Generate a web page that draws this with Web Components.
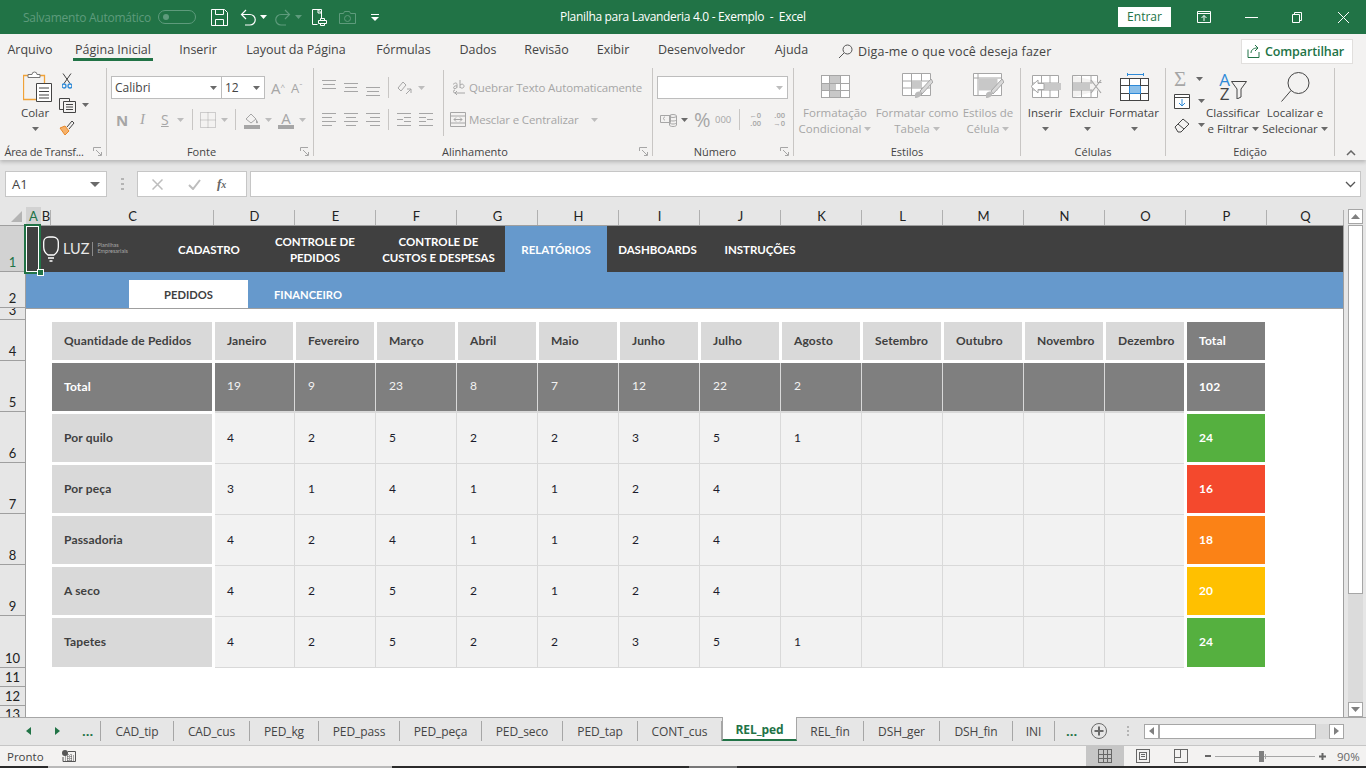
<!DOCTYPE html>
<html lang="pt-BR">
<head>
<meta charset="utf-8">
<title>Planilha para Lavanderia</title>
<style>
  html, body { margin: 0; height: 100%; overflow: hidden; background: #e6e6e6; }
  body { display: flex; flex-direction: column; width: 1366px; height: 768px; font-family: "Open Sans", "Noto Sans", sans-serif; }
  .strip { height: 2px; flex: none; background: linear-gradient(90deg, #2b2b2b 0 48px, #b9b9b9 48px 392px, #2b2b2b 392px 689px, #777 689px 737px, #2b2b2b 737px); }
</style>
</head>
<body>
<title-bar></title-bar>
<menu-tabs></menu-tabs>
<excel-ribbon></excel-ribbon>
<formula-bar></formula-bar>
<excel-sheet>
  <nav-bar></nav-bar>
  <sub-nav></sub-nav>
  <report-table></report-table>
</excel-sheet>
<sheet-tabs>
  <sheet-tab style="width:73px">CAD_tip</sheet-tab>
  <sheet-tab style="width:76px">CAD_cus</sheet-tab>
  <sheet-tab style="width:69px">PED_kg</sheet-tab>
  <sheet-tab style="width:81px">PED_pass</sheet-tab>
  <sheet-tab style="width:82px">PED_peça</sheet-tab>
  <sheet-tab style="width:81px">PED_seco</sheet-tab>
  <sheet-tab style="width:75px">PED_tap</sheet-tab>
  <sheet-tab style="width:84px">CONT_cus</sheet-tab>
  <sheet-tab style="width:75px" active>REL_ped</sheet-tab>
  <sheet-tab style="width:67px">REL_fin</sheet-tab>
  <sheet-tab style="width:76px">DSH_ger</sheet-tab>
  <sheet-tab style="width:73px">DSH_fin</sheet-tab>
  <sheet-tab style="width:42px">INI</sheet-tab>
</sheet-tabs>
<status-bar></status-bar>
<div class="strip"></div>

<script>
const GREY = '#a6a6a6';
const caret = (c = '#6a6a6a') => `<svg width="7" height="4" viewBox="0 0 7 4" style="flex:none"><path d="M0 0h7L3.5 4z" fill="${c}"/></svg>`;
const lines = (rows, c = GREY) => `<svg width="14" height="20" viewBox="0 0 14 20" style="flex:none" shape-rendering="crispEdges">${rows.map(r => `<rect x="${r[0]}" y="${r[1]}" width="${r[2]}" height="1" fill="${c}"/>`).join('')}</svg>`;

class TitleBar extends HTMLElement {
  constructor() {
    super();
    this.attachShadow({ mode: 'open' });
    this.shadowRoot.innerHTML = `
      <style>
        :host { display: flex; flex: none; height: 34px; background: #217346; color: #fff; align-items: center; font-size: 12px; position: relative; }
        .dim { color: #5e9b7c; margin-left: 23px; width: 135px; white-space: nowrap; letter-spacing: -.25px; }
        svg { display: block; flex: none; }
        .title { position: absolute; left: 560px; top: 8px; white-space: nowrap; letter-spacing: -.32px; }
        .qat { display: flex; align-items: center; }
        .enter { width: 53px; height: 20px; background: #fff; color: #217346; margin-left: auto; line-height: 20px; text-align: center; }
        .win { display: flex; align-items: center; }
      </style>
      <div class="dim">Salvamento Automático</div>
      <div class="qat">
        <svg width="38" height="14" viewBox="0 0 38 14" fill="none" stroke="#5e9b7c"><rect x=".5" y=".5" width="37" height="13" rx="6.5"/><circle cx="8" cy="7" r="3" fill="#5e9b7c" stroke="none"/></svg>
        <svg style="margin-left:15px" width="17" height="17" viewBox="0 0 17 17" fill="none" stroke="#fff"><path d="M.5.5h13l3 3v13H.5z"/><path d="M4.5.5v5h8v-5M4.5 16.5v-6h8v6"/></svg>
        <svg style="margin-left:12px" width="16" height="17" viewBox="0 0 16 17" fill="none" stroke="#fff" stroke-width="1.2"><path d="M6 1L1.500 5.500 6 10M1.500 5.500H10a4.700 4.700 0 0 1 0 10.500H5"/></svg>
        <span style="margin-left:4px;display:flex">${caret('#fff')}</span>
        <svg style="margin-left:8px" width="16" height="17" viewBox="0 0 16 17" fill="none" stroke="#5e9b7c" stroke-width="1.2"><path d="M10 1l4.500 4.500L10 10M14.500 5.500H6a4.700 4.700 0 0 0 0 10.500h5"/></svg>
        <span style="margin-left:4px;display:flex">${caret('#5e9b7c')}</span>
        <svg style="margin-left:10px" width="15" height="17" viewBox="0 0 15 17" fill="none" stroke="#fff"><path d="M9.500 9.500V.5H.5v15h5M6 .5l3.500 3.500H6z"/><path d="M6.500 11.500h8v3h-8zM8.500 11.500v-2h4v2M8.500 14.500v2h4v-2" fill="#217346"/></svg>
        <svg style="margin-left:12px" width="17" height="13" viewBox="0 0 17 13" fill="none" stroke="#5e9b7c"><path d="M.5 2.500h4l1-2h5l1 2h5v10H.5z"/><circle cx="8.500" cy="7.500" r="3"/></svg>
        <svg style="margin-left:15px" width="8" height="7" viewBox="0 0 8 7" fill="#fff"><rect width="8" height="1"/><path d="M0 3h8L4 7z"/></svg>
      </div>
      <div class="title">Planilha para Lavanderia 4.0 - Exemplo&nbsp; -&nbsp; Excel</div>
      <div class="enter">Entrar</div>
      <div class="win">
        <svg style="margin-left:26px" width="14" height="12" viewBox="0 0 14 12" fill="none" stroke="#fff"><path d="M.5.500h13v11H.5zM.5 2.500h13M7 10V4.500M4.500 7L7 4.500 9.500 7"/></svg>
        <svg style="margin-left:34px" width="13" height="1" viewBox="0 0 13 1"><rect width="13" height="1" fill="#fff"/></svg>
        <svg style="margin-left:34px" width="10" height="11" viewBox="0 0 10 11" fill="none" stroke="#fff"><path d="M.5 2.500h7v8h-7zM2.500 2.500v-2h7v8h-2"/></svg>
        <svg style="margin-left:36px;margin-right:17px" width="11" height="11" viewBox="0 0 11 11" fill="none" stroke="#fff"><path d="M0 0l11 11M11 0L0 11"/></svg>
      </div>`;
  }
}
customElements.define('title-bar', TitleBar);

class MenuTabs extends HTMLElement {
  constructor() {
    super();
    this.attachShadow({ mode: 'open' });
    const tabs = [['Inserir', 90], ['Layout da Página', 106], ['Fórmulas', 109], ['Dados', 40], ['Revisão', 97], ['Exibir', 36], ['Desenvolvedor', 141], ['Ajuda', 39]];
    this.shadowRoot.innerHTML = `
      <style>
        :host { display: flex; flex: none; height: 34px; background: #f3f2f1; color: #444; font-size: 12.5px; align-items: center; position: relative; z-index: 2; }
        .tab { text-align: center; white-space: nowrap; flex: none; height: 34px; line-height: 32px; box-sizing: border-box; display: flex; justify-content: center; }
        .tab.on { border-bottom: 3px solid #217346; height: 27px; width: 80px; margin-left: 13px; align-self: flex-start; }
        .search { display: flex; align-items: center; gap: 5px; margin-left: 27px; white-space: nowrap; letter-spacing: .17px; }
        .share { margin-left: auto; margin-right: 13px; width: 112px; height: 25px; background: #fff; border: 1px solid #e1dfdd; box-sizing: border-box; color: #217346; font-weight: 600; display: flex; align-items: center; justify-content: center; gap: 4px; font-size: 12.5px; letter-spacing: -.1px; padding-right: 3px; }
        svg { display: block; flex: none; }
      </style>
      <div class="tab" style="width:60px">Arquivo</div>
      <div class="tab on">Página Inicial</div>
      ${tabs.map(t => `<div class="tab" style="width:${t[1]}px">${t[0]}</div>`).join('')}
      <div class="search">
        <svg width="15" height="15" viewBox="0 0 15 15" fill="none" stroke="#555"><circle cx="9.500" cy="5.500" r="4.500"/><path d="M6 9l-5 5"/></svg>
        Diga-me o que você deseja fazer
      </div>
      <div class="share">
        <svg width="14" height="14" viewBox="0 0 14 14" fill="none" stroke="#217346"><path d="M1 5.500v8h11V8M4 9c0-3 2.500-5 6-5M8 1l3 3-3 3"/></svg>
        Compartilhar
      </div>`;
  }
}
customElements.define('menu-tabs', MenuTabs);

class RibbonGroup extends HTMLElement {
  constructor() {
    super();
    this.attachShadow({ mode: 'open' });
    const launcher = this.hasAttribute('launcher');
    this.shadowRoot.innerHTML = `
      <style>
        :host { display: flex; flex-direction: column; flex: none; box-sizing: border-box; height: 88px; border-right: 1px solid #c8c6c4; position: relative; }
        .body { display: flex; height: 77px; flex: none; }
        .label { font-size: 11px; line-height: 14px; color: #444; text-align: center; white-space: nowrap; padding-right: var(--label-shift, 0); letter-spacing: var(--label-ls, 0); }
        svg { position: absolute; right: 4px; bottom: 0; }
      </style>
      <div class="body"><slot></slot></div>
      <div class="label">${this.getAttribute('label')}</div>
      ${launcher ? `<svg width="9" height="9" viewBox="0 0 9 9" fill="none" stroke="${GREY}"><path d="M.5 4V.5H8M8.500 8.500H5M3 3l5 5M8.500 5v3.500"/></svg>` : ''}`;
  }
}
customElements.define('ribbon-group', RibbonGroup);

class ExcelRibbon extends HTMLElement {
  constructor() {
    super();
    this.attachShadow({ mode: 'open' });
    this.shadowRoot.innerHTML = `
      <style>
        :host { display: flex; flex: none; height: 92px; background: #f3f2f1; box-shadow: 0 2px 4px rgba(0,0,0,.22); position: relative; z-index: 1; font-size: 11.5px; color: #444; }
        svg { display: block; flex: none; }
        .big { display: flex; flex-direction: column; align-items: center; flex: none; line-height: 16px; white-space: nowrap; }
        .big .ico { height: 37px; display: flex; align-items: center; justify-content: center; }
        .big .l { height: 16px; display: flex; align-items: center; gap: 3px; }
        .off { color: ${GREY}; }
        .col { display: flex; flex-direction: column; flex: none; }
        .sm { height: 22px; display: flex; align-items: center; gap: 6px; flex: none; }
        .rows { display: flex; flex-direction: column; gap: 9px; padding-top: 8px; flex: none; }
        .row { display: flex; align-items: center; height: 23px; flex: none; }
        .txt { font-size: 11.5px; white-space: nowrap; letter-spacing: -.14px; }
        .sel { box-sizing: border-box; height: 23px; background: #fff; border: 1px solid #bdbdbd; display: flex; align-items: center; justify-content: space-between; padding: 0 4px 0 3px; font-size: 12px; color: #444; flex: none; }
        .g { color: ${GREY}; }
        .sep { width: 1px; height: 21px; background: #c8c6c4; flex: none; }
        .bold { font-weight: 700; font-size: 15px; }
        .fontA { font-size: 15px; color: ${GREY}; line-height: 16px; position: relative; }
        .chev { position: absolute; left: 1346px; top: 82px; }
        .sortA { color: #2e8ad8; font-size: 17px; line-height: 14px; }
        .sortZ { color: #444; font-size: 17px; line-height: 14px; }
      </style>

      <ribbon-group label="Área de Transf..." launcher style="width:107px;--label-shift:18px;--label-ls:-.25px">
        <div class="big" style="width:30px;margin-left:20px">
          <div class="ico" style="margin-left:5px">
            <svg width="29" height="31" viewBox="0 0 29 31" fill="none"><path d="M6 4.500H.5v24h14" stroke="#f0a238" stroke-width="1.300"/><path d="M16 4.500h5.500V12" stroke="#f0a238" stroke-width="1.300"/><path d="M5 6.500v-3h4a2.500 2.500 0 0 1 5 0h3v3z" fill="#fff" stroke="#777"/><path d="M13.500 12.500h15v18h-15z" fill="#fff" stroke="#444"/><path d="M16 17h10M16 20.500h10M16 24h10M16 27h10" stroke="#444"/></svg>
          </div>
          <div class="l">Colar</div>
          <div class="l">${caret()}</div>
        </div>
        <div class="col" style="margin-left:9px;padding-top:2px">
          <div class="sm" style="padding-left:3px"><svg width="10" height="16" viewBox="0 0 10 16" fill="none"><path d="M1 .5l7 10M9 .5l-7 10" stroke="#444"/><circle cx="2" cy="13" r="2" stroke="#2e8ad8" stroke-width="1.300"/><circle cx="8" cy="13" r="2" stroke="#2e8ad8" stroke-width="1.300"/></svg></div>
          <div class="sm" style="margin-top:2px"><svg width="17" height="15" viewBox="0 0 17 15" fill="none" stroke="#444"><path d="M.5.500h10v3M.5.500v11h4"/><path d="M4.500 3.500h12v11h-12zM7 6.500h7M7 9h7M7 11.500h7"/></svg>${caret()}</div>
          <div class="sm" style="margin-top:1px"><svg width="16" height="16" viewBox="0 0 16 16"><path d="M1 8l5 7 4-4-4-5z" fill="#f6b26b" stroke="#e8892a"/><path d="M8 7l5-6 2 2-5 6" fill="none" stroke="#444"/></svg></div>
        </div>
      </ribbon-group>

      <ribbon-group label="Fonte" launcher style="width:207px;--label-shift:17px">
        <div class="rows" style="margin-left:4px">
          <div class="row">
            <div class="sel" style="width:111px">Calibri ${caret()}</div>
            <div class="sel" style="width:44px;margin-left:-1px">12 ${caret()}</div>
            <span class="fontA" style="margin-left:6px">A<sup style="font-size:8px;vertical-align:4px;line-height:0">^</sup></span>
            <span class="fontA" style="margin-left:6px;font-size:13px">A<sup style="font-size:8px;vertical-align:4px;line-height:0">ˇ</sup></span>
          </div>
          <div class="row">
            <span class="g bold" style="margin-left:5px;width:12px">N</span>
            <span class="g" style="margin-left:12px;width:9px;font-style:italic;font-size:15px;font-family:'Liberation Serif',serif">I</span>
            <span class="g" style="margin-left:12px;width:13px;font-size:14px;text-decoration:underline">S</span>
            <span style="margin-left:3px">${caret('#bdbdbd')}</span>
            <span class="sep" style="margin-left:8px"></span>
            <svg style="margin-left:7px" width="16" height="16" viewBox="0 0 16 16" fill="none" stroke="${GREY}" stroke-dasharray="1 1"><path d="M.5.500h15v15H.5zM8 .500v15M.5 8h15"/></svg>
            <span style="margin-left:5px">${caret('#bdbdbd')}</span>
            <span class="sep" style="margin-left:7px"></span>
            <svg style="margin-left:8px" width="16" height="18" viewBox="0 0 16 18"><path d="M2 8l5-5 5 5-5 4z" fill="none" stroke="${GREY}"/><path d="M12 8c1 1.500 2 2.500 2 3.500s-2 1-2 0z" fill="${GREY}"/><rect y="14" width="16" height="4" fill="${GREY}"/></svg>
            <span style="margin-left:5px">${caret('#bdbdbd')}</span>
            <div style="margin-left:6px;width:16px;display:flex;flex-direction:column;align-items:center;flex:none"><span class="fontA" style="line-height:14px">A</span><span style="width:16px;height:4px;background:${GREY}"></span></div>
            <span style="margin-left:5px">${caret('#bdbdbd')}</span>
          </div>
        </div>
      </ribbon-group>

      <ribbon-group label="Alinhamento" launcher style="width:339px;--label-shift:16px">
        <div class="rows" style="margin-left:8px;width:121px">
          <div class="row">
            <svg width="14" height="20" viewBox="0 0 14 20" shape-rendering="crispEdges" fill="${GREY}"><rect y="2" width="14" height="1"/><rect x="1" y="6" width="12" height="1"/><rect y="10" width="14" height="1"/></svg>
            <svg style="margin-left:8px" width="14" height="20" viewBox="0 0 14 20" shape-rendering="crispEdges" fill="${GREY}"><rect y="5" width="14" height="1"/><rect x="1" y="9" width="12" height="1"/><rect y="13" width="14" height="1"/></svg>
            <svg style="margin-left:8px" width="14" height="20" viewBox="0 0 14 20" shape-rendering="crispEdges" fill="${GREY}"><rect y="9" width="14" height="1"/><rect x="1" y="13" width="12" height="1"/><rect y="17" width="14" height="1"/></svg>
            <span class="sep" style="margin-left:8px"></span>
            <svg style="margin-left:7px" width="16" height="16" viewBox="0 0 16 16" fill="none" stroke="${GREY}"><path d="M2 8l5-6 3 3-5 6zM10 14l5-5M11 9h4v4"/></svg>
            <span style="margin-left:6px">${caret('#bdbdbd')}</span>
          </div>
          <div class="row">
            ${lines([[0, 3, 14], [0, 7, 10], [0, 11, 14], [0, 15, 10]])}
            <span style="margin-left:8px;display:flex">${lines([[0, 3, 14], [2, 7, 10], [0, 11, 14], [2, 15, 10]])}</span>
            <span style="margin-left:8px;display:flex">${lines([[0, 3, 14], [4, 7, 10], [0, 11, 14], [4, 15, 10]])}</span>
            <span class="sep" style="margin-left:8px"></span>
            <span style="margin-left:8px;display:flex">${lines([[0, 3, 14], [7, 7, 7], [0, 9, 6], [7, 11, 7], [0, 15, 14]])}</span>
            <span style="margin-left:8px;display:flex">${lines([[0, 3, 14], [0, 7, 7], [8, 9, 6], [0, 11, 7], [0, 15, 14]])}</span>
          </div>
        </div>
        <div style="width:1px;height:66px;background:#c8c6c4;flex:none;margin-top:2px"></div>
        <div class="rows" style="margin-left:6px">
          <div class="row off txt" style="gap:2px">
            <svg style="margin-left:2px" width="15" height="17" viewBox="0 0 15 17" fill="none" stroke="${GREY}"><path d="M1 5.500c2-2 4-2 4 0v3M5 7c-3-1-4 2-3 2.500s3-.5 3-1.500M8 1v8M8 6c3-2 4 0 4 1.500S9 10 8 8M13 14H3a1.500 1.500 0 0 1 0-3M5 16l-2-2 2-2"/></svg>
            Quebrar Texto Automaticamente
          </div>
          <div class="row off txt" style="gap:3px">
            <svg width="16" height="15" viewBox="0 0 16 15" fill="none" stroke="${GREY}"><path d="M.5.500h15v14H.5zM.5 4h15M.5 11h15M4 7.500h8M6 5.500l-2 2 2 2M10 5.500l2 2-2 2"/></svg>
            Mesclar e Centralizar
            <span style="margin-left:9px">${caret('#bdbdbd')}</span>
          </div>
        </div>
      </ribbon-group>

      <ribbon-group label="Número" launcher style="width:141px;--label-shift:16px">
        <div class="rows" style="margin-left:4px">
          <div class="row"><div class="sel" style="width:131px;justify-content:flex-end">${caret('#bdbdbd')}</div></div>
          <div class="row">
            <svg style="margin-left:3px" width="17" height="14" viewBox="0 0 17 14" fill="none" stroke="${GREY}"><path d="M.5 2.500h10v7H.5zM5 4c-2 0-2 3 0 3"/><ellipse cx="13" cy="3" rx="3.500" ry="1.500"/><path d="M9.500 3v9c0 2 7 2 7 0V3M9.500 6.500c0 2 7 2 7 0M9.500 9.500c0 2 7 2 7 0"/></svg>
            <span style="margin-left:4px">${caret()}</span>
            <span style="margin-left:6px;font-size:20px;color:${GREY};line-height:20px;width:21px">%</span>
            <span style="font-size:9.500px;color:${GREY};width:20px">000</span>
            <span class="sep" style="margin-left:4px"></span>
            <div style="margin-left:6px;width:15px;height:18px;font-size:7.500px;line-height:8px;color:${GREY};text-align:right;font-weight:600;flex:none">←0<br>.00</div>
            <div style="margin-left:8px;width:16px;height:18px;font-size:7.500px;line-height:8px;color:${GREY};text-align:right;font-weight:600;flex:none">.00<br>→0</div>
          </div>
        </div>
      </ribbon-group>

      <ribbon-group label="Estilos" style="width:227px">
        <div class="big off" style="width:82px">
          <div class="ico"><svg width="29" height="23" viewBox="0 0 29 23" shape-rendering="crispEdges"><path d="M.5.500h28v22H.5z" fill="#fff" stroke="${GREY}"/><path d="M8 1h11v7H8zM1 8h14v7H1zM8 15h12v7H8z" fill="#c8c8c8"/><path d="M.5 8h28M.5 15h28M8 .500v22M19.500 .500v22" fill="none" stroke="${GREY}"/></svg></div>
          <div class="l">Formatação</div>
          <div class="l">Condicional ${caret('#bdbdbd')}</div>
        </div>
        <div class="big off" style="width:82px">
          <div class="ico"><svg width="31" height="28" viewBox="0 0 31 28"><path d="M.5.500h28v22H.5zM.5 8h28M.5 15h28M9.500 .500v22M19.500 .500v22" fill="#fff" stroke="${GREY}"/><path d="M10 8h10v7H10z" fill="#c8c8c8"/><path d="M29 6L18 18l2 3L31 9z" fill="#d8d8d8" stroke="${GREY}"/><path d="M13 21c2-3 5-3 6-1 1 3-3 5-6 5z" fill="#bbb"/></svg></div>
          <div class="l">Formatar como</div>
          <div class="l">Tabela ${caret('#bdbdbd')}</div>
        </div>
        <div class="big off" style="width:60px">
          <div class="ico"><svg width="31" height="28" viewBox="0 0 31 28"><path d="M.5.500h28v22H.5z" fill="#fff" stroke="${GREY}"/><path d="M.5 5h28M5 .500v22" fill="none" stroke="${GREY}"/><path d="M5.500 5.500h19v12h-19z" fill="#c8c8c8"/><path d="M29 6L18 18l2 3L31 9z" fill="#d8d8d8" stroke="${GREY}"/><path d="M13 21c2-3 5-3 6-1 1 3-3 5-6 5z" fill="#bbb"/></svg></div>
          <div class="l">Estilos de</div>
          <div class="l">Célula ${caret('#bdbdbd')}</div>
        </div>
      </ribbon-group>

      <ribbon-group label="Células" style="width:145px">
        <div class="big" style="width:48px">
          <div class="ico"><svg width="31" height="23" viewBox="0 0 31 23"><path d="M2.500.500h26v22h-26zM2.500 8h26M2.500 15h26M11.500 .500v22M20 .500v22" fill="#fff" stroke="${GREY}"/><path d="M12 8h19v7H12z" fill="#c8c8c8"/><path d="M8 5l-7 6.500L8 18v-3.500h6v-6H8z" fill="#fff" stroke="${GREY}"/></svg></div>
          <div class="l">Inserir</div>
          <div class="l">${caret()}</div>
        </div>
        <div class="big" style="width:36px">
          <div class="ico"><svg width="30" height="23" viewBox="0 0 30 23"><path d="M.5.500h25v7h4M.5 8h20M.5 15h20M.5 22.500h25v-7M.5.500v22M9.500 .500v22M19 .500v7M19 15v7.500" fill="#fff" stroke="${GREY}"/><path d="M1 8h17v7H1z" fill="#c8c8c8"/><path d="M19 5l10 13M29 5L19 18" fill="none" stroke="${GREY}" stroke-width="1.200"/></svg></div>
          <div class="l">Excluir</div>
          <div class="l">${caret()}</div>
        </div>
        <div class="big" style="width:58px">
          <div class="ico"><svg width="29" height="28" viewBox="0 0 29 28" shape-rendering="crispEdges"><path d="M7 1.500h16M7 0v3M23 0v3" fill="none" stroke="#2e8ad8"/><path d="M.5 5.500h28v22H.5z" fill="#fff" stroke="#444"/><path d="M9 12.500h11v8H9z" fill="#8cc0ea" stroke="#2e8ad8"/><path d="M.5 12.500h8M20.500 12.500h8M.5 20.500h8M20.500 20.500h8M9 5.500v7M20 5.500v7M9 20.500v7M20 20.500v7" fill="none" stroke="#444"/></svg></div>
          <div class="l">Formatar</div>
          <div class="l">${caret()}</div>
        </div>
      </ribbon-group>

      <ribbon-group label="Edição" style="width:169px">
        <div class="col" style="width:41px;padding-left:8px;box-sizing:border-box">
          <div class="sm"><span style="font-size:21px;color:${GREY};line-height:18px;width:15px;font-family:'Liberation Serif',serif">Σ</span><span style="margin-left:1px">${caret()}</span></div>
          <div class="sm"><svg width="16" height="15" viewBox="0 0 16 15" fill="none"><path d="M.5.500h15v14H.5z" fill="#fff" stroke="#444"/><path d="M.5 3.500h15" stroke="#444"/><path d="M8 5v7M5 9l3 3 3-3" stroke="#2e8ad8"/></svg><span style="margin-left:2px">${caret()}</span></div>
          <div class="sm" style="margin-top:2px"><svg width="16" height="15" viewBox="0 0 16 15" fill="none" stroke="#444"><path d="M1 9l8-8 6 5-8 8H4z"/><path d="M4 6l6 5"/></svg><span style="margin-left:2px">${caret()}</span></div>
        </div>
        <div class="big" style="width:52px">
          <div class="ico" style="gap:0;align-items:flex-start;padding-top:5px;box-sizing:border-box">
            <div style="display:flex;flex-direction:column;width:14px;align-items:center;margin-left:-2px"><span class="sortA">A</span><span class="sortZ">Z</span></div>
            <svg style="margin-top:8px;margin-left:-1px" width="16" height="18" viewBox="0 0 16 18" fill="none" stroke="#444"><path d="M.5.500h15L10 8v8l-4 2V8z"/></svg>
          </div>
          <div class="l">Classificar</div>
          <div class="l">e Filtrar ${caret()}</div>
        </div>
        <div class="big" style="width:72px">
          <div class="ico"><svg width="29" height="30" viewBox="0 0 29 30" fill="none" stroke="#444"><circle cx="17.500" cy="11" r="10.500"/><path d="M10 18.500L.5 29.500"/></svg></div>
          <div class="l">Localizar e</div>
          <div class="l">Selecionar ${caret()}</div>
        </div>
      </ribbon-group>

      <svg class="chev" width="10" height="6" viewBox="0 0 10 6" fill="none" stroke="#666" stroke-width="1.500"><path d="M1 5l4-4 4 4"/></svg>`;
  }
}
customElements.define('excel-ribbon', ExcelRibbon);

class FormulaBar extends HTMLElement {
  constructor() {
    super();
    this.attachShadow({ mode: 'open' });
    this.shadowRoot.innerHTML = `
      <style>
        :host { display: flex; flex: none; height: 47px; background: #e6e6e6; padding: 11px 5px 10px; box-sizing: border-box; font-size: 12.5px; color: #444; }
        .box { background: #fff; border: 1px solid #c6c6c6; box-sizing: border-box; display: flex; align-items: center; height: 26px; flex: none; }
        .name { width: 102px; justify-content: space-between; padding: 0 6px 0 6px; font-size: 13px; }
        .name i { width: 0; height: 0; border: 4px solid transparent; border-top: 5px solid #6a6a6a; border-bottom: 0; border-left-width: 5px; border-right-width: 5px; }
        .dots { width: 30px; display: flex; align-items: center; justify-content: center; flex: none; }
        .btns { width: 110px; }
        .input { flex: 1; margin-left: 3px; justify-content: flex-end; padding-right: 4px; }
        .fx { font-family: "Liberation Serif", serif; font-style: italic; font-weight: 700; font-size: 13px; color: #666; margin-left: 16px; }
        svg { display: block; flex: none; }
      </style>
      <div class="box name">A1 <i></i></div>
      <div class="dots"><svg width="3" height="12" viewBox="0 0 3 12" fill="#b4b4b4"><rect width="3" height="2"/><rect y="5" width="3" height="2"/><rect y="10" width="3" height="2"/></svg></div>
      <div class="box btns">
        <svg style="margin-left:14px" width="11" height="11" viewBox="0 0 11 11" fill="none" stroke="#bdbdbd" stroke-width="1.500"><path d="M.5.500l10 10M10.500 .500l-10 10"/></svg>
        <svg style="margin-left:25px" width="13" height="11" viewBox="0 0 13 11" fill="none" stroke="#bdbdbd" stroke-width="2"><path d="M1 6l4 4 7-9"/></svg>
        <span class="fx">f<span style="font-size:10px">x</span></span>
      </div>
      <div class="box input"><svg width="11" height="7" viewBox="0 0 11 7" fill="none" stroke="#555" stroke-width="1.300"><path d="M1 1l4.500 4.500L10 1"/></svg></div>`;
  }
}
customElements.define('formula-bar', FormulaBar);

class ExcelSheet extends HTMLElement {
  constructor() {
    super();
    this.attachShadow({ mode: 'open' });
    const cols = [['A', 15], ['B', 10], ['C', 163]];
    'DEFGHIJKLMNOP'.split('').forEach(c => cols.push([c, 81]));
    cols.push(['Q', 77]);
    const rows = [[1, 46], [2, 36], [3, 12], [4, 41], [5, 51], [6, 51], [7, 51], [8, 51], [9, 51], [10, 52], [11, 19], [12, 19], [13, 11]];
    this.shadowRoot.innerHTML = `
      <style>
        :host { display: grid; grid-template-columns: 26px 1fr 22px; grid-template-rows: 19px 1fr; height: 510px; flex: none; background: #e6e6e6; font-family: Lato, Carlito, sans-serif; position: relative; }
        .corner { position: relative; border-bottom: 1px solid #9f9f9f; }
        .corner i { position: absolute; right: 4px; bottom: 3px; width: 0; height: 0; border-left: 11px solid transparent; border-bottom: 11px solid #b4b4b4; }
        .cols { display: flex; border-bottom: 1px solid #9f9f9f; overflow: hidden; }
        .ch { flex: none; box-sizing: border-box; text-align: center; font-size: 13px; line-height: 19px; color: #222; position: relative; }
        .ch::after { content: ""; position: absolute; right: 0; top: 3px; bottom: 0; width: 1px; background: #b0b0b0; }
        .ch.on { background: #d2d2d2; color: #217346; }
        .ch.on::after { display: none; }
        .rows { display: flex; flex-direction: column; border-right: 1px solid #9f9f9f; overflow: hidden; }
        .rh { flex: none; box-sizing: border-box; border-bottom: 1px solid #9f9f9f; display: flex; align-items: flex-end; justify-content: center; font-size: 13px; line-height: 17px; color: #222; overflow: hidden; }
        .rh.on { background: #d2d2d2; color: #217346; }
        .rh.cut { align-items: flex-start; border-bottom: 0; }
        .canvas { background: #fff; border-right: 1px solid #9f9f9f; overflow: hidden; display: flex; flex-direction: column; }
        .cursor { position: absolute; left: 24px; top: 17px; width: 17px; height: 50px; border: 2px solid #217346; box-shadow: inset 0 0 0 1px #fff; box-sizing: border-box; }
        .handle { position: absolute; left: 37px; top: 62px; width: 5px; height: 5px; background: #217346; border: 1px solid #fff; box-sizing: content-box; }
        .vs { display: flex; flex-direction: column; align-items: center; background: #e6e6e6; }
        .vs .track { width: 15px; flex: 1; background: #dbdbdb; display: flex; flex-direction: column; }
        .btn { width: 15px; height: 15px; box-sizing: border-box; background: #fff; border: 1px solid #a6a6a6; display: flex; align-items: center; justify-content: center; flex: none; }
        .thumb { box-sizing: border-box; height: 369px; background: #fff; border: 1px solid #a6a6a6; }
      </style>
      <div class="corner"><i></i></div>
      <div class="cols">${cols.map((c, i) => `<div class="ch${i === 0 ? ' on' : ''}" style="width:${c[1]}px">${c[0]}</div>`).join('')}</div>
      <div style="grid-column:3;grid-row:1 / span 2;display:flex;flex-direction:column;align-items:center;background:#e6e6e6;padding:2px 0 0">
        <div class="vs" style="flex:1">
          <div class="btn"><svg width="9" height="5" viewBox="0 0 9 5"><path d="M4.500 0L9 5H0z" fill="#808080"/></svg></div>
          <div class="track" style="margin-top:1px">
            <div class="thumb"></div>
          </div>
          <div class="btn"><svg width="9" height="5" viewBox="0 0 9 5"><path d="M0 0h9L4.500 5z" fill="#808080"/></svg></div>
        </div>
      </div>
      <div class="rows">${rows.map((r, i) => `<div class="rh${i === 0 ? ' on' : ''}${r[0] === 13 ? ' cut' : ''}" style="height:${r[1]}px">${r[0]}</div>`).join('')}</div>
      <div class="canvas">
        <slot></slot>
      </div>
      <div class="cursor"></div>
      <div class="handle"></div>`;
  }
}
customElements.define('excel-sheet', ExcelSheet);

class NavBar extends HTMLElement {
  constructor() {
    super();
    this.attachShadow({ mode: 'open' });
    const items = [['CADASTRO', 98], ['CONTROLE DE<br>PEDIDOS', 114], ['CONTROLE DE<br>CUSTOS E DESPESAS', 133], ['RELATÓRIOS', 102, true], ['DASHBOARDS', 101], ['INSTRUÇÕES', 104]];
    this.shadowRoot.innerHTML = `
      <style>
        :host { display: flex; flex: none; height: 46px; background: #404040; color: #fff; font: 700 11.5px/16px Lato, Carlito, sans-serif; }
        .logo { width: 134px; flex: none; display: flex; align-items: center; box-sizing: border-box; padding-left: 17px; color: #e8e8e8; }
        .luz { font-weight: 400; font-size: 14.5px; margin-left: 4px; }
        .tiny { font-weight: 400; font-size: 5.5px; line-height: 6px; color: #a8a8a8; margin-left: 3px; border-left: 1px solid #8a8a8a; padding-left: 4px; height: 14px; white-space: nowrap; }
        .item { flex: none; display: flex; align-items: center; justify-content: center; text-align: center; white-space: nowrap; padding-top: 2px; box-sizing: border-box; }
        .item.on { background: #6699cc; }
      </style>
      <div class="logo">
        <svg width="16" height="26" viewBox="0 0 16 26" fill="none" stroke="#fff" stroke-width="1.300" style="flex:none"><path d="M5 19C2 17 .7 15 .7 11V6C.7 3 3 1 6 1h4c3 0 5.300 2 5.300 5v5c0 4-1.300 6-4.300 8z"/><path d="M5 22h6M6.500 25h3"/></svg>
        <span class="luz">LUZ</span>
        <span class="tiny">Planilhas<br>Empresariais</span>
      </div>
      ${items.map(i => `<div class="item${i[2] ? ' on' : ''}" style="width:${i[1]}px">${i[0]}</div>`).join('')}`;
  }
}
customElements.define('nav-bar', NavBar);

class SubNav extends HTMLElement {
  constructor() {
    super();
    this.attachShadow({ mode: 'open' });
    this.shadowRoot.innerHTML = `
      <style>
        :host { display: flex; flex: none; height: 37px; box-sizing: border-box; background: #6699cc; border-bottom: 1px solid #9f9f9f; padding: 8px 0 0 103px; font: 700 11.2px/30px Lato, Carlito, sans-serif; color: #fff; }
        div { width: 119px; height: 28px; text-align: center; flex: none; }
        .on { background: #fff; color: #404040; }
        .next { width: 120px; }
      </style>
      <div class="on">PEDIDOS</div>
      <div class="next">FINANCEIRO</div>`;
  }
}
customElements.define('sub-nav', SubNav);

class ReportTable extends HTMLElement {
  constructor() {
    super();
    this.attachShadow({ mode: 'open' });
    const months = ['Janeiro', 'Fevereiro', 'Março', 'Abril', 'Maio', 'Junho', 'Julho', 'Agosto', 'Setembro', 'Outubro', 'Novembro', 'Dezembro'];
    const data = [
      ['Total', [19, 9, 23, 8, 7, 12, 22, 2], 102, ''],
      ['Por quilo', [4, 2, 5, 2, 2, 3, 5, 1], 24, '#55b03f'],
      ['Por peça', [3, 1, 4, 1, 1, 2, 4], 16, '#f4492d'],
      ['Passadoria', [4, 2, 4, 1, 1, 2, 4], 18, '#fb8216'],
      ['A seco', [4, 2, 5, 2, 1, 2, 4], 20, '#ffc000'],
      ['Tapetes', [4, 2, 5, 2, 2, 3, 5, 1], 24, '#55b03f']
    ];
    let html = `<div class="c head">Quantidade de Pedidos</div>`;
    html += months.map(m => `<div class="c head">${m}</div>`).join('');
    html += `<div class="c head tot">Total</div>`;
    data.forEach((row, r) => {
      const first = r === 0;
      const last = r === data.length - 1;
      html += `<div class="c ${first ? 'head tot' : 'head'}">${row[0]}</div>`;
      for (let m = 0; m < 12; m++) {
        const v = row[1][m] === undefined ? '' : row[1][m];
        const cls = [first ? 'sum' : 'val', m === 0 ? 'firstm' : '', m === 11 ? 'lastm' : '', last ? 'end' : ''].join(' ');
        html += `<div class="${cls}">${v}</div>`;
      }
      html += `<div class="c ${first ? 'head tot' : 'color'}" style="${row[3] ? 'background:' + row[3] : ''}">${row[2]}</div>`;
    });
    this.shadowRoot.innerHTML = `
      <style>
        :host { display: grid; flex: none; margin: 11px 0 0 25px; grid-template-columns: 163px repeat(13, 81px); grid-template-rows: 41px 51px 51px 51px 51px 51px 52px; font: 12px Lato, Carlito, sans-serif; color: #1c1c2c; }
        div { display: flex; align-items: center; box-sizing: border-box; white-space: nowrap; min-width: 0; }
        .c { margin: 2px 2px 1px 1px; padding: 0 0 2px 12px; }
        .head { background: #d9d9d9; color: #404040; font-weight: 700; letter-spacing: .15px; }
        .tot { background: #7f7f7f; color: #fff; }
        .color { color: #fff; font-weight: 700; }
        .sum, .val { padding-left: 13px; border-right: 1px solid #d9d9d9; }
        .sum { background: #7f7f7f; color: #f2f2f2; margin-top: 2px; padding-bottom: 3px; border-bottom: 1px solid #d9d9d9; }
        .val { background: #f2f2f2; border-top: 1px solid #d9d9d9; padding-bottom: 1px; }
        .val.end { border-bottom: 1px solid #d9d9d9; }
        .firstm { margin-left: 1px; padding-left: 12px; }
        .lastm { border-right: 0; margin-right: 2px; }
      </style>
      ${html}`;
  }
}
customElements.define('report-table', ReportTable);

class SheetTab extends HTMLElement {
  constructor() {
    super();
    this.attachShadow({ mode: 'open' });
    this.shadowRoot.innerHTML = `
      <style>
        :host { display: flex; flex: none; align-items: center; justify-content: center; box-sizing: border-box; height: 20px; margin-top: 3px; border-right: 1px solid #a6a6a6; font-size: 12px; color: #444; white-space: nowrap; letter-spacing: -.1px; }
        :host([active]) { height: 24px; margin-top: -1px; padding-top: 3px; background: #fff; border-left: 1px solid #a6a6a6; border-bottom: 2px solid #217346; color: #217346; font-weight: 700; }
      </style>
      <slot></slot>`;
  }
}
customElements.define('sheet-tab', SheetTab);

class SheetTabs extends HTMLElement {
  constructor() {
    super();
    this.attachShadow({ mode: 'open' });
    this.shadowRoot.innerHTML = `
      <style>
        :host { display: flex; flex: none; height: 29px; box-sizing: border-box; background: #e6e6e6; border-top: 1px solid #a6a6a6; border-bottom: 1px solid #c6c6c6; padding-top: 0; align-items: flex-start; }
        .nav { width: 101px; height: 20px; margin-top: 3px; box-sizing: border-box; border-right: 1px solid #a6a6a6; display: flex; align-items: center; flex: none; }
        .more { color: #217346; font-weight: 700; font-size: 13px; letter-spacing: 0; line-height: 16px; flex: none; }
        svg { display: block; flex: none; }
        .tail { display: flex; height: 26px; align-items: center; flex: none; }
        .hs { display: flex; height: 15px; width: 200px; background: #dbdbdb; flex: none; }
        .b { box-sizing: border-box; width: 15px; height: 15px; background: #fff; border: 1px solid #a6a6a6; display: flex; align-items: center; justify-content: center; flex: none; }
        .th { box-sizing: border-box; width: 157px; height: 15px; background: #fff; border: 1px solid #a6a6a6; flex: none; }
      </style>
      <div class="nav">
        <svg style="margin-left:26px" width="5" height="8" viewBox="0 0 5 8"><path d="M5 0v8L0 4z" fill="#217346"/></svg>
        <svg style="margin-left:24px" width="5" height="8" viewBox="0 0 5 8"><path d="M0 0v8l5-4z" fill="#217346"/></svg>
        <span class="more" style="margin-left:22px">...</span>
      </div>
      <slot></slot>
      <div class="tail">
        <span class="more" style="margin-left:11px;width:12px">...</span>
        <svg style="margin-left:13px" width="16" height="16" viewBox="0 0 16 16" fill="none" stroke="#6a6a6a"><circle cx="8" cy="8" r="7.500"/><path d="M8 3.500v9M3.500 8h9" stroke-width="2"/></svg>
        <svg style="margin-left:20px" width="3" height="10" viewBox="0 0 3 10" fill="#b4b4b4"><rect width="2" height="2"/><rect y="4" width="2" height="2"/><rect y="8" width="2" height="2"/></svg>
        <div class="hs" style="margin-left:14px">
          <div class="b"><svg width="5" height="8" viewBox="0 0 5 8"><path d="M5 0v8L0 4z" fill="#808080"/></svg></div>
          <div class="th"></div>
          <span style="width:13px;flex:none"></span>
          <div class="b"><svg width="5" height="8" viewBox="0 0 5 8"><path d="M0 0v8l5-4z" fill="#808080"/></svg></div>
        </div>
      </div>`;
  }
}
customElements.define('sheet-tabs', SheetTabs);

class StatusBar extends HTMLElement {
  constructor() {
    super();
    this.attachShadow({ mode: 'open' });
    this.shadowRoot.innerHTML = `
      <style>
        :host { display: flex; flex: none; height: 20px; background: #f3f2f1; align-items: center; font-size: 11.500px; color: #444; }
        svg { display: block; flex: none; }
        .view { width: 38px; height: 20px; display: flex; align-items: center; justify-content: center; flex: none; }
        .view.on { background: #c6c6c6; }
        .slider { width: 100px; height: 1px; background: #a6a6a6; position: relative; margin: 0 4px; flex: none; }
        .slider i { position: absolute; left: 44px; top: -5px; width: 5px; height: 11px; background: #808080; }
        .slider b { position: absolute; left: 50px; top: -2px; width: 1px; height: 5px; background: #a6a6a6; }
      </style>
      <span style="margin-left:7px;width:55px">Pronto</span>
      <svg width="14" height="12" viewBox="0 0 14 12"><circle cx="3" cy="3" r="3" fill="#555"/><path d="M6 1.500h7.500v10H1V7" fill="none" stroke="#555"/><path d="M3 6h9M3 8h9M3 10h9M6 4v7M9 4v7" stroke="#555" stroke-dasharray="1 1" fill="none"/></svg>
      <div class="view on" style="margin-left:auto"><svg width="14" height="14" viewBox="0 0 14 14" fill="none" stroke="#666" shape-rendering="crispEdges"><path d="M.5.500h13v13H.5zM.5 5h13M.5 9.500h13M5 .500v13M9.500 .500v13"/></svg></div>
      <div class="view"><svg width="14" height="14" viewBox="0 0 14 14" fill="none" stroke="#666" shape-rendering="crispEdges"><path d="M.5.500h13v13H.5zM3.500 3.500h7v7h-7zM5 5.500h4M5 7.500h4"/></svg></div>
      <div class="view"><svg width="14" height="14" viewBox="0 0 14 14" fill="none" stroke="#666" shape-rendering="crispEdges"><path d="M.5.500h13v13H.5zM.5 8.500h5.500V.5"/></svg></div>
      <svg style="margin-left:5px" width="6" height="2" viewBox="0 0 6 2"><rect width="6" height="2" fill="#666"/></svg>
      <div class="slider"><i></i><b></b></div>
      <svg width="7" height="7" viewBox="0 0 7 7" fill="#666"><rect y="2.500" width="7" height="2"/><rect x="2.500" width="2" height="7"/></svg>
      <span style="margin-left:11px;margin-right:8px;width:21px;flex:none;color:#666;white-space:nowrap">90%</span>`;
  }
}
customElements.define('status-bar', StatusBar);
</script>
</body>
</html>
